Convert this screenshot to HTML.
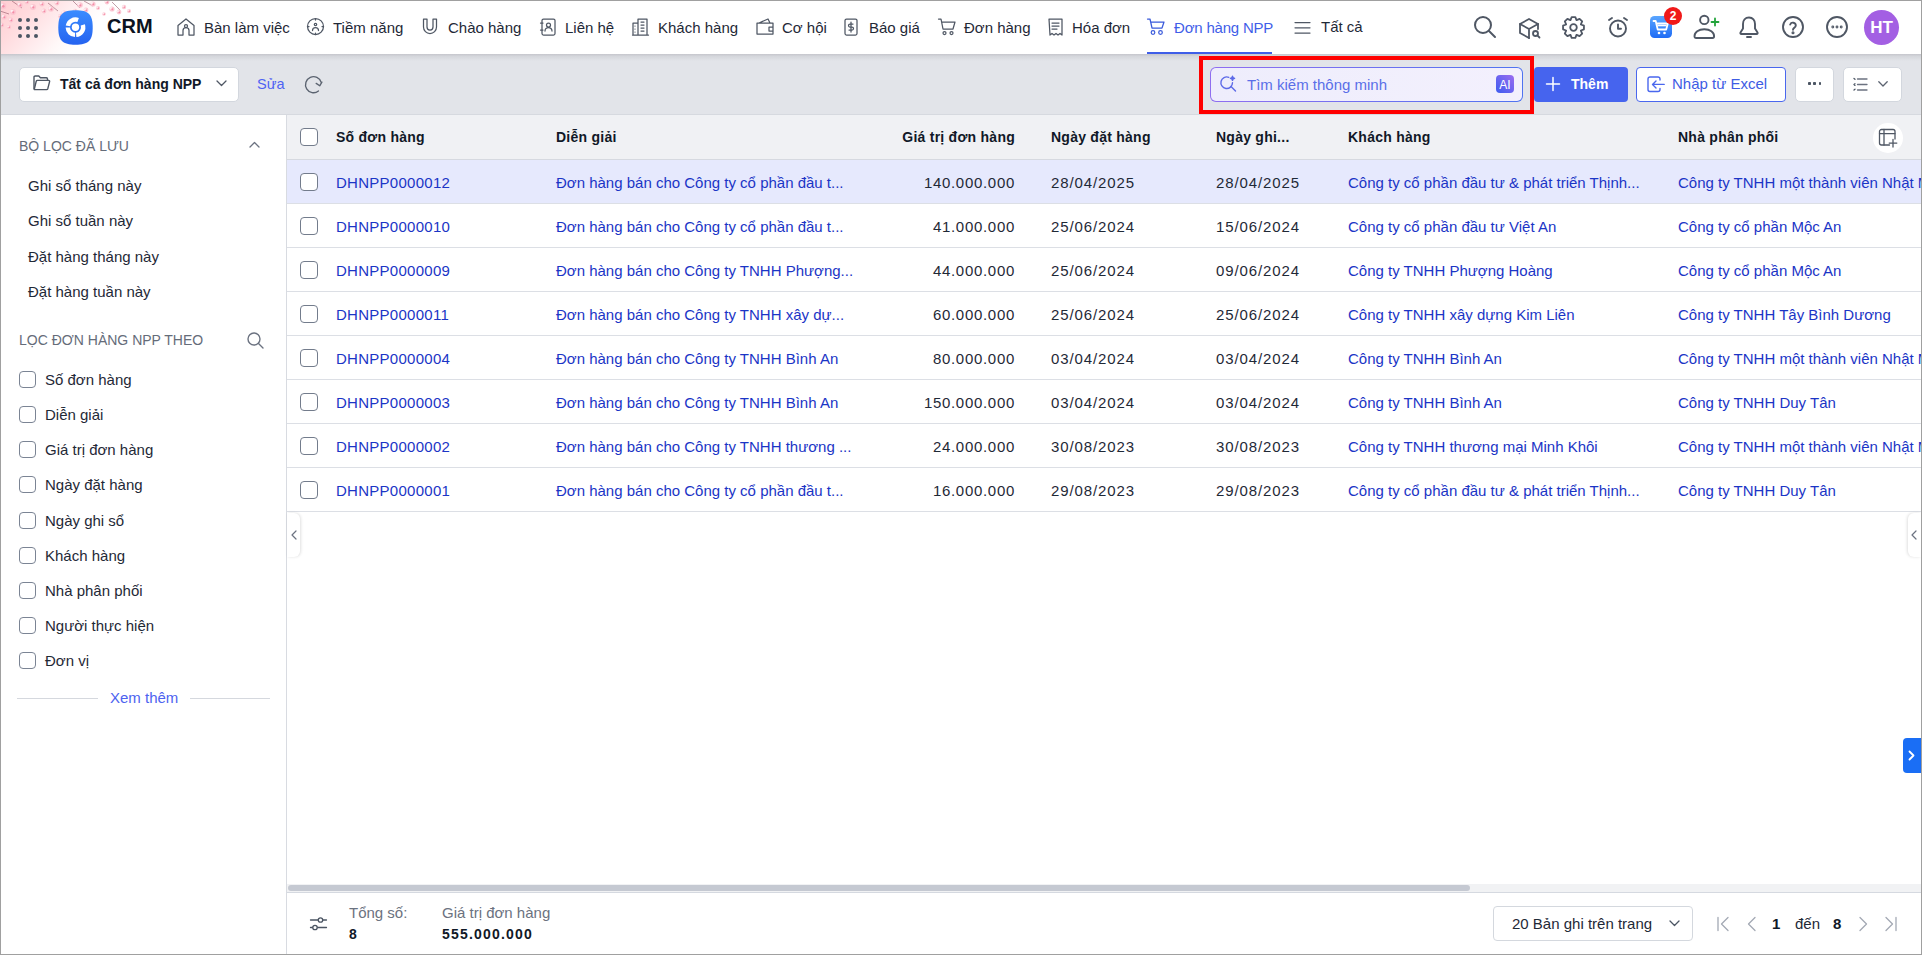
<!DOCTYPE html>
<html><head><meta charset="utf-8">
<style>
*{box-sizing:border-box;margin:0;padding:0}
html,body{width:1922px;height:955px;overflow:hidden;background:#fff;font-family:"Liberation Sans", sans-serif;color:#1f2937}
.a{position:absolute}
.t{position:absolute;white-space:nowrap;line-height:1}
svg{position:absolute;overflow:visible}
</style></head><body>

<div class="a" style="left:0;top:0;width:1922px;height:54px;background:#fff"></div>
<div class="a" style="left:0;top:0;width:160px;height:54px;background:linear-gradient(132deg,#ffcdd2 0px,#ffdadd 28px,#ffeaec 52px,#fff8f8 72px,#ffffff 88px)"></div>
<svg style="left:0;top:0" width="140" height="40" viewBox="0 0 140 40"><path d="M12 1 L22 8 M0 11 L9 14 M48 3 L58 11 M72 0 L80 8 M84 1 L93 6 M112 2 L120 10" stroke="#7d3b4f" stroke-width="0.9" fill="none" opacity="0.55"/><circle cx="3" cy="6" r="3.2" fill="#fbc3cf" opacity="0.9"/><circle cx="1.7" cy="5.0" r="1.4" fill="#ffffff" opacity="0.7"/><circle cx="3.3" cy="6.3" r="1.2" fill="#f3819f" opacity="0.85"/><circle cx="13" cy="12" r="3" fill="#fbc3cf" opacity="0.9"/><circle cx="11.8" cy="11.1" r="1.4" fill="#ffffff" opacity="0.7"/><circle cx="13.3" cy="12.3" r="1.1" fill="#f3819f" opacity="0.85"/><circle cx="20" cy="5" r="2.6" fill="#fbc3cf" opacity="0.9"/><circle cx="19.0" cy="4.2" r="1.2" fill="#ffffff" opacity="0.7"/><circle cx="20.3" cy="5.3" r="1.0" fill="#f3819f" opacity="0.85"/><circle cx="27" cy="2" r="2.2" fill="#fbc3cf" opacity="0.9"/><circle cx="26.1" cy="1.3" r="1.0" fill="#ffffff" opacity="0.7"/><circle cx="27.3" cy="2.3" r="0.8" fill="#f3819f" opacity="0.85"/><circle cx="33" cy="7" r="3" fill="#fbc3cf" opacity="0.9"/><circle cx="31.8" cy="6.1" r="1.4" fill="#ffffff" opacity="0.7"/><circle cx="33.3" cy="7.3" r="1.1" fill="#f3819f" opacity="0.85"/><circle cx="42" cy="4" r="2.5" fill="#fbc3cf" opacity="0.9"/><circle cx="41.0" cy="3.2" r="1.1" fill="#ffffff" opacity="0.7"/><circle cx="42.3" cy="4.3" r="0.9" fill="#f3819f" opacity="0.85"/><circle cx="44" cy="11" r="2.4" fill="#fbc3cf" opacity="0.9"/><circle cx="43.0" cy="10.3" r="1.1" fill="#ffffff" opacity="0.7"/><circle cx="44.3" cy="11.3" r="0.9" fill="#f3819f" opacity="0.85"/><circle cx="51" cy="9" r="2.8" fill="#fbc3cf" opacity="0.9"/><circle cx="49.9" cy="8.2" r="1.3" fill="#ffffff" opacity="0.7"/><circle cx="51.3" cy="9.3" r="1.1" fill="#f3819f" opacity="0.85"/><circle cx="57" cy="3" r="2.4" fill="#fbc3cf" opacity="0.9"/><circle cx="56.0" cy="2.3" r="1.1" fill="#ffffff" opacity="0.7"/><circle cx="57.3" cy="3.3" r="0.9" fill="#f3819f" opacity="0.85"/><circle cx="64" cy="13" r="2.6" fill="#fbc3cf" opacity="0.9"/><circle cx="63.0" cy="12.2" r="1.2" fill="#ffffff" opacity="0.7"/><circle cx="64.3" cy="13.3" r="1.0" fill="#f3819f" opacity="0.85"/><circle cx="75" cy="11" r="2.2" fill="#fbc3cf" opacity="0.9"/><circle cx="74.1" cy="10.3" r="1.0" fill="#ffffff" opacity="0.7"/><circle cx="75.3" cy="11.3" r="0.8" fill="#f3819f" opacity="0.85"/><circle cx="80" cy="5" r="2.8" fill="#fbc3cf" opacity="0.9"/><circle cx="78.9" cy="4.2" r="1.3" fill="#ffffff" opacity="0.7"/><circle cx="80.3" cy="5.3" r="1.1" fill="#f3819f" opacity="0.85"/><circle cx="86" cy="10" r="2.4" fill="#fbc3cf" opacity="0.9"/><circle cx="85.0" cy="9.3" r="1.1" fill="#ffffff" opacity="0.7"/><circle cx="86.3" cy="10.3" r="0.9" fill="#f3819f" opacity="0.85"/><circle cx="93" cy="4" r="2.6" fill="#fbc3cf" opacity="0.9"/><circle cx="92.0" cy="3.2" r="1.2" fill="#ffffff" opacity="0.7"/><circle cx="93.3" cy="4.3" r="1.0" fill="#f3819f" opacity="0.85"/><circle cx="98" cy="8" r="2" fill="#fbc3cf" opacity="0.9"/><circle cx="97.2" cy="7.4" r="0.9" fill="#ffffff" opacity="0.7"/><circle cx="98.3" cy="8.3" r="0.8" fill="#f3819f" opacity="0.85"/><circle cx="107" cy="2" r="2.4" fill="#fbc3cf" opacity="0.9"/><circle cx="106.0" cy="1.3" r="1.1" fill="#ffffff" opacity="0.7"/><circle cx="107.3" cy="2.3" r="0.9" fill="#f3819f" opacity="0.85"/><circle cx="112" cy="9" r="2.6" fill="#fbc3cf" opacity="0.9"/><circle cx="111.0" cy="8.2" r="1.2" fill="#ffffff" opacity="0.7"/><circle cx="112.3" cy="9.3" r="1.0" fill="#f3819f" opacity="0.85"/><circle cx="119" cy="12" r="2.4" fill="#fbc3cf" opacity="0.9"/><circle cx="118.0" cy="11.3" r="1.1" fill="#ffffff" opacity="0.7"/><circle cx="119.3" cy="12.3" r="0.9" fill="#f3819f" opacity="0.85"/><circle cx="124" cy="7" r="2.2" fill="#fbc3cf" opacity="0.9"/><circle cx="123.1" cy="6.3" r="1.0" fill="#ffffff" opacity="0.7"/><circle cx="124.3" cy="7.3" r="0.8" fill="#f3819f" opacity="0.85"/><circle cx="129" cy="11" r="2" fill="#fbc3cf" opacity="0.9"/><circle cx="128.2" cy="10.4" r="0.9" fill="#ffffff" opacity="0.7"/><circle cx="129.3" cy="11.3" r="0.8" fill="#f3819f" opacity="0.85"/><circle cx="4" cy="17" r="2.6" fill="#fbc3cf" opacity="0.9"/><circle cx="3.0" cy="16.2" r="1.2" fill="#ffffff" opacity="0.7"/><circle cx="4.3" cy="17.3" r="1.0" fill="#f3819f" opacity="0.85"/><circle cx="11" cy="20" r="2.4" fill="#fbc3cf" opacity="0.9"/><circle cx="10.0" cy="19.3" r="1.1" fill="#ffffff" opacity="0.7"/><circle cx="11.3" cy="20.3" r="0.9" fill="#f3819f" opacity="0.85"/><circle cx="2" cy="25" r="2.2" fill="#fbc3cf" opacity="0.9"/><circle cx="1.1" cy="24.3" r="1.0" fill="#ffffff" opacity="0.7"/><circle cx="2.3" cy="25.3" r="0.8" fill="#f3819f" opacity="0.85"/><circle cx="9" cy="27" r="2" fill="#fbc3cf" opacity="0.9"/><circle cx="8.2" cy="26.4" r="0.9" fill="#ffffff" opacity="0.7"/><circle cx="9.3" cy="27.3" r="0.8" fill="#f3819f" opacity="0.85"/><circle cx="60" cy="16" r="2" fill="#fbc3cf" opacity="0.9"/><circle cx="59.2" cy="15.4" r="0.9" fill="#ffffff" opacity="0.7"/><circle cx="60.3" cy="16.3" r="0.8" fill="#f3819f" opacity="0.85"/><circle cx="104" cy="14" r="1.8" fill="#fbc3cf" opacity="0.9"/><circle cx="103.3" cy="13.5" r="0.8" fill="#ffffff" opacity="0.7"/><circle cx="104.3" cy="14.3" r="0.7" fill="#f3819f" opacity="0.85"/></svg>
<div class="a" style="left:18px;top:18px;width:4.2px;height:4.2px;border-radius:50%;background:#4b5563"></div>
<div class="a" style="left:18px;top:26px;width:4.2px;height:4.2px;border-radius:50%;background:#4b5563"></div>
<div class="a" style="left:18px;top:34px;width:4.2px;height:4.2px;border-radius:50%;background:#4b5563"></div>
<div class="a" style="left:26px;top:18px;width:4.2px;height:4.2px;border-radius:50%;background:#4b5563"></div>
<div class="a" style="left:26px;top:26px;width:4.2px;height:4.2px;border-radius:50%;background:#4b5563"></div>
<div class="a" style="left:26px;top:34px;width:4.2px;height:4.2px;border-radius:50%;background:#4b5563"></div>
<div class="a" style="left:34px;top:18px;width:4.2px;height:4.2px;border-radius:50%;background:#4b5563"></div>
<div class="a" style="left:34px;top:26px;width:4.2px;height:4.2px;border-radius:50%;background:#4b5563"></div>
<div class="a" style="left:34px;top:34px;width:4.2px;height:4.2px;border-radius:50%;background:#4b5563"></div>
<svg style="left:58px;top:10px" width="35" height="35" viewBox="0 0 35 35">
<defs><linearGradient id="lg" x1="0" y1="0" x2="0" y2="1"><stop offset="0" stop-color="#3a8cff"/><stop offset="1" stop-color="#2563f0"/></linearGradient></defs>
<path d="M17.5 0.3 C30.5 0.3 34.7 4.5 34.7 17.5 C34.7 30.5 30.5 34.7 17.5 34.7 C4.5 34.7 0.3 30.5 0.3 17.5 C0.3 4.5 4.5 0.3 17.5 0.3Z" fill="url(#lg)"/>
<circle cx="17.5" cy="17.2" r="3.7" fill="#fff"/>
<path d="M9.92 15.86 A7.7 7.7 0 0 1 20.13 9.96" stroke="#fff" stroke-width="4.4" fill="none"/>
<path d="M24.82 14.82 A7.7 7.7 0 0 1 18.17 24.87" stroke="#fff" stroke-width="4.4" fill="none"/>
<path d="M17.10 24.89 A7.7 7.7 0 0 1 9.80 17.47" stroke="#fff" stroke-width="4.4" fill="none"/>
</svg>
<div class="t" style="left:107px;top:16px;font-size:20px;font-weight:700;color:#0b1220">CRM</div>
<svg style="left:177px;top:18px" width="18" height="18" viewBox="0 0 18 18" fill="none" stroke="#4f5764" stroke-width="1.25" stroke-linecap="round" stroke-linejoin="round"><path d="M1 17V7.5L9 1l8 6.5V17h-5v-4.5a3 3 0 0 0-6 0V17z"/><circle cx="9" cy="8" r="1.5"/></svg>
<div class="t" style="left:204px;top:20px;font-size:15px;color:#1f2937">Bàn làm việc</div>
<svg style="left:307px;top:18px" width="18" height="18" viewBox="0 0 18 18" fill="none" stroke="#4f5764" stroke-width="1.25" stroke-linecap="round" stroke-linejoin="round"><circle cx="8.5" cy="8.5" r="8"/><circle cx="8.5" cy="6.5" r="1.2"/><path d="M5.5 12.5a3 3 0 0 1 6 0"/><path d="M8.5 0.5v1.5M0.5 8.5h1.5M15 8.5h1.5M8.5 15v1.5"/></svg>
<div class="t" style="left:333px;top:20px;font-size:15px;color:#1f2937">Tiềm năng</div>
<svg style="left:422px;top:18px" width="18" height="18" viewBox="0 0 18 18" fill="none" stroke="#4f5764" stroke-width="1.25" stroke-linecap="round" stroke-linejoin="round"><path d="M1.5 1v8a6.5 6.5 0 0 0 13 0V1h-3.5v8a3 3 0 0 1-6 0V1z"/></svg>
<div class="t" style="left:448px;top:20px;font-size:15px;color:#1f2937">Chào hàng</div>
<svg style="left:540px;top:18px" width="18" height="18" viewBox="0 0 18 18" fill="none" stroke="#4f5764" stroke-width="1.25" stroke-linecap="round" stroke-linejoin="round"><rect x="2" y="1" width="13" height="16" rx="1.5"/><circle cx="8.5" cy="7" r="2"/><path d="M5 13a3.5 3.5 0 0 1 7 0M0.5 5h2.5M0.5 12h2.5"/></svg>
<div class="t" style="left:565px;top:20px;font-size:15px;color:#1f2937">Liên hệ</div>
<svg style="left:632px;top:18px" width="18" height="18" viewBox="0 0 18 18" fill="none" stroke="#4f5764" stroke-width="1.25" stroke-linecap="round" stroke-linejoin="round"><path d="M1 17V5h5M6 17V1h9v16M0.5 17h16M3 8v0M3 11v0M3 14v0M9 4h3M9 7h3M9 10h3M9 13h3"/></svg>
<div class="t" style="left:658px;top:20px;font-size:15px;color:#1f2937">Khách hàng</div>
<svg style="left:756px;top:18px" width="18" height="18" viewBox="0 0 18 18" fill="none" stroke="#4f5764" stroke-width="1.25" stroke-linecap="round" stroke-linejoin="round"><path d="M1 5h16v11H1zM3 5l9-4 2 4M13 9h4v4h-4z"/></svg>
<div class="t" style="left:782px;top:20px;font-size:15px;color:#1f2937">Cơ hội</div>
<svg style="left:844px;top:18px" width="18" height="18" viewBox="0 0 18 18" fill="none" stroke="#4f5764" stroke-width="1.25" stroke-linecap="round" stroke-linejoin="round"><rect x="1" y="1" width="12" height="16" rx="1.5"/><path d="M7 4v10M9 6H6a1 1 0 0 0 0 3h2a1 1 0 0 1 0 3H5"/></svg>
<div class="t" style="left:869px;top:20px;font-size:15px;color:#1f2937">Báo giá</div>
<svg style="left:938px;top:18px" width="18" height="18" viewBox="0 0 18 18" fill="none" stroke="#4f5764" stroke-width="1.25" stroke-linecap="round" stroke-linejoin="round"><path d="M0.5 1h2.5l2 10h10l2-7H4"/><circle cx="6.5" cy="15" r="1.5"/><circle cx="13.5" cy="15" r="1.5"/></svg>
<div class="t" style="left:964px;top:20px;font-size:15px;color:#1f2937">Đơn hàng</div>
<svg style="left:1048px;top:18px" width="18" height="18" viewBox="0 0 18 18" fill="none" stroke="#4f5764" stroke-width="1.25" stroke-linecap="round" stroke-linejoin="round"><path d="M1 1h13v16l-2-1.5-2 1.5-2-1.5-2 1.5-2-1.5-2 1.5zM4 5h7M4 8h7M4 11h5"/></svg>
<div class="t" style="left:1072px;top:20px;font-size:15px;color:#1f2937">Hóa đơn</div>
<svg style="left:1147px;top:18px" width="18" height="18" viewBox="0 0 18 18" fill="none" stroke="#3b5bdb" stroke-width="1.25" stroke-linecap="round" stroke-linejoin="round"><path d="M0.5 1h2.5l2 9h10l2-6H4"/><circle cx="6" cy="14.5" r="1.8"/><circle cx="13.5" cy="14.5" r="1.8"/></svg>
<div class="t" style="left:1174px;top:20px;font-size:15px;letter-spacing:-0.2px;color:#3f5ee8">Đơn hàng NPP</div>
<svg style="left:1294px;top:18px" width="18" height="18" viewBox="0 0 18 18" fill="none" stroke="#4f5764" stroke-width="1.25" stroke-linecap="round" stroke-linejoin="round"><path d="M1 4.5h15M1 9.75h15M1 15h15"/></svg>
<div class="t" style="left:1321px;top:19px;font-size:15px;color:#1f2937">Tất cả</div>
<div class="a" style="left:1147px;top:52px;width:125px;height:2px;background:#3f5ee8"></div>
<svg style="left:1474px;top:16px" width="22" height="22" viewBox="0 0 22 22" fill="none" stroke="#4f5764" stroke-width="2" stroke-linecap="round" stroke-linejoin="round"><circle cx="9" cy="9" r="8"/><path d="M15 15l6 6"/></svg>
<svg style="left:1519px;top:17px" width="22" height="22" viewBox="0 0 22 22" fill="none" stroke="#4f5764" stroke-width="1.8" stroke-linecap="round" stroke-linejoin="round"><path d="M19 7L10 2 1 7v9l9 5"/><path d="M1 7l9 5 9-5M10 12v9M19 7v5"/><circle cx="16.5" cy="16.5" r="2.5"/><path d="M18.3 18.3l2.2 2.2"/></svg>
<svg style="left:1562px;top:16px" width="23" height="23" viewBox="0 0 23 23" fill="none" stroke="#4f5764" stroke-width="1.8" stroke-linecap="round" stroke-linejoin="round"><circle cx="11.5" cy="11.5" r="3.3"/><path d="M9.66 1.06 L13.34 1.06 L14.50 4.08 L14.63 4.14 L17.58 2.82 L20.18 5.42 L18.86 8.37 L18.92 8.50 L21.94 9.66 L21.94 13.34 L18.92 14.50 L18.86 14.63 L20.18 17.58 L17.58 20.18 L14.63 18.86 L14.50 18.92 L13.34 21.94 L9.66 21.94 L8.50 18.92 L8.37 18.86 L5.42 20.18 L2.82 17.58 L4.14 14.63 L4.08 14.50 L1.06 13.34 L1.06 9.66 L4.08 8.50 L4.14 8.37 L2.82 5.42 L5.42 2.82 L8.37 4.14 L8.50 4.08Z"/></svg>
<svg style="left:1608px;top:17px" width="20" height="21" viewBox="0 0 20 21" fill="none" stroke="#4f5764" stroke-width="1.9" stroke-linecap="round" stroke-linejoin="round"><circle cx="10" cy="11.5" r="8"/><path d="M10 7.5v4.2h3M1 3l3-2M19 3l-3-2"/></svg>
<svg style="left:1650px;top:16px" width="22" height="22" viewBox="0 0 22 22">
<defs><linearGradient id="cg" x1="0" y1="0" x2="0" y2="1"><stop offset="0" stop-color="#5aa6ff"/><stop offset="1" stop-color="#1f6cf5"/></linearGradient></defs>
<rect x="0" y="0" width="22" height="22" rx="4.5" fill="url(#cg)"/>
<path d="M3.5 5h2.2l2 8.5h8.5l1.6-6H6.5" stroke="#fff" stroke-width="1.8" fill="none" stroke-linejoin="round" stroke-linecap="round"/>
<path d="M7.5 9.5h9" stroke="#fff" stroke-width="1.6"/>
<circle cx="9" cy="17" r="1.3" fill="#fff"/><circle cx="14.5" cy="17" r="1.3" fill="#fff"/>
</svg>
<div class="a" style="left:1664px;top:7px;width:18px;height:18px;border-radius:50%;background:#f01919"></div>
<div class="t" style="left:1664px;top:10px;width:18px;text-align:center;font-size:12px;font-weight:700;color:#fff">2</div>
<svg style="left:1693px;top:15px" width="26" height="24" viewBox="0 0 26 24" fill="none" stroke="#4f5764" stroke-width="1.9" stroke-linecap="round" stroke-linejoin="round"><circle cx="11.3" cy="4.9" r="4.2"/><path d="M1.5 21.3c0-4.2 4-7 9.8-7s9.8 2.8 9.8 7c0 1-.6 1.7-1.6 1.7H3.1c-1 0-1.6-.7-1.6-1.7z"/></svg>
<svg style="left:1711px;top:18px" width="8" height="8" viewBox="0 0 8 8" fill="none" stroke="#22a33a" stroke-width="1.8" stroke-linecap="round" stroke-linejoin="round"><path d="M4 0.5v7M0.5 4h7"/></svg>
<svg style="left:1739px;top:16px" width="20" height="23" viewBox="0 0 20 23" fill="none" stroke="#4f5764" stroke-width="1.9" stroke-linecap="round" stroke-linejoin="round"><path d="M10 1.5c-3.8 0-6 3-6 6.5v4.5L1.5 16.5c-.4.7 0 1.5.8 1.5h15.4c.8 0 1.2-.8.8-1.5L16 12.5V8c0-3.5-2.2-6.5-6-6.5z"/><path d="M8 21h4"/></svg>
<svg style="left:1782px;top:16px" width="22" height="22" viewBox="0 0 22 22" fill="none" stroke="#4f5764" stroke-width="1.9" stroke-linecap="round" stroke-linejoin="round"><circle cx="11" cy="11" r="10"/><path d="M8.2 8.5a2.9 2.9 0 0 1 5.6 1c0 2-2.8 2.5-2.8 4.2"/><circle cx="11" cy="16.8" r="0.6" fill="#4b5563"/></svg>
<svg style="left:1826px;top:16px" width="22" height="22" viewBox="0 0 22 22" fill="none" stroke="#4f5764" stroke-width="1.9" stroke-linecap="round" stroke-linejoin="round"><circle cx="11" cy="11" r="10"/><circle cx="6.8" cy="11" r="0.5" fill="#4b5563"/><circle cx="11" cy="11" r="0.5" fill="#4b5563"/><circle cx="15.2" cy="11" r="0.5" fill="#4b5563"/></svg>
<div class="a" style="left:1864px;top:10px;width:35px;height:35px;border-radius:50%;background:#a35fe3"></div>
<div class="t" style="left:1864px;top:19px;width:35px;text-align:center;font-size:17px;font-weight:700;color:#fff">HT</div>
<div class="a" style="left:0;top:54px;width:1922px;height:61px;background:#e2e4e9"></div>
<div class="a" style="left:0;top:54px;width:1922px;height:7px;background:linear-gradient(#c5c6cc,#d5d7dc 35%,#e2e4e9)"></div>
<div class="a" style="left:0;top:114px;width:1922px;height:1px;background:#d6d9df"></div>
<div class="a" style="left:19px;top:67px;width:220px;height:35px;background:#fff;border-radius:5px;border:1px solid #d3d7de"></div>
<svg style="left:33px;top:75px" width="18" height="16" viewBox="0 0 18 16" fill="none" stroke="#4f5764" stroke-width="1.4" stroke-linecap="round" stroke-linejoin="round"><path d="M1 13.5V2.2C1 1.5 1.5 1 2.2 1h3.6l1.6 1.8h6c.7 0 1.1.5 1.1 1.1V5"/><path d="M1.2 14.5l2-8.2c.2-.6.6-.9 1.2-.9h11.2c.7 0 1.2.6 1 1.3l-1.8 7c-.2.6-.6.9-1.2.9H1.2z"/></svg>
<div class="t" style="left:60px;top:77px;font-size:14px;font-weight:700;color:#111827">Tất cả đơn hàng NPP</div>
<svg style="left:216px;top:80px" width="11" height="7" viewBox="0 0 11 7" fill="none" stroke="#4f5764" stroke-width="1.3" stroke-linecap="round" stroke-linejoin="round"><path d="M1 1l4.5 4.5L10 1"/></svg>
<div class="t" style="left:257px;top:77px;font-size:14.5px;color:#4e62f3">Sửa</div>
<svg style="left:304px;top:76px" width="20" height="18" viewBox="0 0 20 18" fill="none" stroke="#5b6370" stroke-width="1.35" stroke-linecap="round" stroke-linejoin="round"><path d="M14.44 15.03A8 8 0 1 1 17.2 6.4"/><path d="M12.2 7.4l3.5 2.4 2.2-3.6"/></svg>
<div class="a" style="left:1199px;top:56px;width:335px;height:58px;border:4px solid #ff0000"></div>
<div class="a" style="left:1210px;top:67px;width:313px;height:35px;border-radius:6px;background:linear-gradient(90deg,#8f6ef0,#4f73f0);padding:1px"><div style="width:100%;height:100%;border-radius:5px;background:linear-gradient(90deg,#eeedfc,#f3f0fd)"></div></div>
<svg style="left:1220px;top:75px" width="17" height="17" viewBox="0 0 17 17" fill="none" stroke="#5d6ae8" stroke-width="1.4" stroke-linecap="round" stroke-linejoin="round"><path d="M12.5 7.8A5.8 5.8 0 1 1 8.8 2.3"/><path d="M11 11.5l4.5 4.5"/><path d="M12.5 1.2l.6 1.5 1.5.6-1.5.6-.6 1.5-.6-1.5-1.5-.6 1.5-.6z" fill="#6c63ee"/></svg>
<div class="t" style="left:1247px;top:77px;font-size:15px;color:#5a6fe8">Tìm kiếm thông minh</div>
<div class="a" style="left:1496px;top:75px;width:18px;height:18px;border-radius:4px;background:linear-gradient(45deg,#3c5cf0,#9c6cf0)"></div>
<div class="t" style="left:1496px;top:78.5px;width:18px;text-align:center;font-size:12px;color:#fff">AI</div>
<div class="a" style="left:1534px;top:67px;width:94px;height:35px;border-radius:4px;background:#4664ee"></div>
<svg style="left:1546px;top:77px" width="14" height="14" viewBox="0 0 14 14" fill="none" stroke="#fff" stroke-width="1.5" stroke-linecap="round" stroke-linejoin="round"><path d="M7 0.5v13M0.5 7h13"/></svg>
<div class="t" style="left:1571px;top:77px;font-size:14px;font-weight:700;color:#fff">Thêm</div>
<div class="a" style="left:1636px;top:67px;width:150px;height:35px;border-radius:4px;background:#fff;border:1px solid #4a67ee"></div>
<svg style="left:1647px;top:76px" width="19" height="17" viewBox="0 0 19 17" fill="none" stroke="#4a67ee" stroke-width="1.4" stroke-linecap="round" stroke-linejoin="round"><path d="M13 4V3a2 2 0 0 0-2-2H3a2 2 0 0 0-2 2v10.5a2 2 0 0 0 2 2h8a2 2 0 0 0 2-2v-1"/><path d="M17.2 8.4H5.5M9 4.9L5.5 8.4 9 11.9"/></svg>
<div class="t" style="left:1672px;top:76px;font-size:15px;color:#3e5ce4">Nhập từ Excel</div>
<div class="a" style="left:1795px;top:67px;width:39px;height:35px;border-radius:5px;background:#fff;border:1px solid #d3d7de"></div>
<div class="a" style="left:1807.8px;top:82.4px;width:2.9px;height:2.9px;border-radius:0.8px;background:#4b5563"></div>
<div class="a" style="left:1813.2px;top:82.4px;width:2.9px;height:2.9px;border-radius:0.8px;background:#4b5563"></div>
<div class="a" style="left:1818.6px;top:82.4px;width:2.9px;height:2.9px;border-radius:0.8px;background:#4b5563"></div>
<div class="a" style="left:1843px;top:67px;width:59px;height:35px;border-radius:5px;background:#fff;border:1px solid #d3d7de"></div>
<svg style="left:1853px;top:77px" width="15" height="15" viewBox="0 0 15 15" fill="none" stroke="#4b5563" stroke-width="1.3" stroke-linecap="round" stroke-linejoin="round"><path d="M4.5 2h9.5M4.5 7.5h9.5M4.5 13h9.5" stroke="#6b7280"/><path d="M1 1.5l1 .8M2 6.8l-1 .8 1 .8M2 12.2l-1 .8"/></svg>
<svg style="left:1878px;top:81px" width="10" height="6" viewBox="0 0 10 6" fill="none" stroke="#5b6370" stroke-width="1.3" stroke-linecap="round" stroke-linejoin="round"><path d="M0.8 0.8l4.2 4.2 4.2-4.2"/></svg>
<div class="a" style="left:0;top:115px;width:286px;height:840px;background:#fff"></div>
<div class="a" style="left:286px;top:115px;width:1px;height:840px;background:#d8dbe1"></div>
<div class="t" style="left:19px;top:139px;font-size:14px;color:#656c79">BỘ LỌC ĐÃ LƯU</div>
<svg style="left:249px;top:141px" width="11" height="7" viewBox="0 0 11 7" fill="none" stroke="#6b7280" stroke-width="1.3" stroke-linecap="round" stroke-linejoin="round"><path d="M1 6l4.5-4.5L10 6"/></svg>
<div class="t" style="left:28px;top:178px;font-size:15px;color:#1f2937">Ghi sổ tháng này</div>
<div class="t" style="left:28px;top:213px;font-size:15px;color:#1f2937">Ghi sổ tuần này</div>
<div class="t" style="left:28px;top:249px;font-size:15px;color:#1f2937">Đặt hàng tháng này</div>
<div class="t" style="left:28px;top:284px;font-size:15px;color:#1f2937">Đặt hàng tuần này</div>
<div class="t" style="left:19px;top:333px;font-size:14px;color:#656c79">LỌC ĐƠN HÀNG NPP THEO</div>
<svg style="left:247px;top:332px" width="17" height="17" viewBox="0 0 17 17" fill="none" stroke="#6b7280" stroke-width="1.4" stroke-linecap="round" stroke-linejoin="round"><circle cx="7" cy="7" r="6"/><path d="M11.5 11.5l4.5 4.5"/></svg>
<div class="a" style="left:19px;top:371px;width:17px;height:17px;border:1.3px solid #7b8494;border-radius:4px;background:#fff"></div>
<div class="t" style="left:45px;top:372px;font-size:15px;color:#1f2937">Số đơn hàng</div>
<div class="a" style="left:19px;top:406px;width:17px;height:17px;border:1.3px solid #7b8494;border-radius:4px;background:#fff"></div>
<div class="t" style="left:45px;top:407px;font-size:15px;color:#1f2937">Diễn giải</div>
<div class="a" style="left:19px;top:441px;width:17px;height:17px;border:1.3px solid #7b8494;border-radius:4px;background:#fff"></div>
<div class="t" style="left:45px;top:442px;font-size:15px;color:#1f2937">Giá trị đơn hàng</div>
<div class="a" style="left:19px;top:476px;width:17px;height:17px;border:1.3px solid #7b8494;border-radius:4px;background:#fff"></div>
<div class="t" style="left:45px;top:477px;font-size:15px;color:#1f2937">Ngày đặt hàng</div>
<div class="a" style="left:19px;top:512px;width:17px;height:17px;border:1.3px solid #7b8494;border-radius:4px;background:#fff"></div>
<div class="t" style="left:45px;top:513px;font-size:15px;color:#1f2937">Ngày ghi sổ</div>
<div class="a" style="left:19px;top:547px;width:17px;height:17px;border:1.3px solid #7b8494;border-radius:4px;background:#fff"></div>
<div class="t" style="left:45px;top:548px;font-size:15px;color:#1f2937">Khách hàng</div>
<div class="a" style="left:19px;top:582px;width:17px;height:17px;border:1.3px solid #7b8494;border-radius:4px;background:#fff"></div>
<div class="t" style="left:45px;top:583px;font-size:15px;color:#1f2937">Nhà phân phối</div>
<div class="a" style="left:19px;top:617px;width:17px;height:17px;border:1.3px solid #7b8494;border-radius:4px;background:#fff"></div>
<div class="t" style="left:45px;top:618px;font-size:15px;color:#1f2937">Người thực hiện</div>
<div class="a" style="left:19px;top:652px;width:17px;height:17px;border:1.3px solid #7b8494;border-radius:4px;background:#fff"></div>
<div class="t" style="left:45px;top:653px;font-size:15px;color:#1f2937">Đơn vị</div>
<div class="a" style="left:17px;top:698px;width:81px;height:1px;background:#d5d8de"></div>
<div class="a" style="left:190px;top:698px;width:80px;height:1px;background:#d5d8de"></div>
<div class="t" style="left:110px;top:690px;font-size:15px;color:#4d63f0">Xem thêm</div>
<div class="a" style="left:287px;top:115px;width:1635px;height:44px;background:#f0f1f4"></div>
<div class="a" style="left:287px;top:159px;width:1635px;height:1px;background:#d6d9e0"></div>
<div class="a" style="left:300px;top:128px;width:18px;height:18px;border:1.3px solid #737c8c;border-radius:4px;background:#fff"></div>
<div class="t" style="left:336px;top:130px;font-size:14px;font-weight:700;letter-spacing:0.25px;color:#111827">Số đơn hàng</div>
<div class="t" style="left:556px;top:130px;font-size:14px;font-weight:700;letter-spacing:0.25px;color:#111827">Diễn giải</div>
<div class="t" style="left:815px;width:200px;text-align:right;top:130px;font-size:14px;font-weight:700;letter-spacing:0.25px;margin-right:-0.25px;color:#111827">Giá trị đơn hàng</div>
<div class="t" style="left:1051px;top:130px;font-size:14px;font-weight:700;letter-spacing:0.25px;color:#111827">Ngày đặt hàng</div>
<div class="t" style="left:1216px;top:130px;font-size:14px;font-weight:700;letter-spacing:0.25px;color:#111827">Ngày ghi...</div>
<div class="t" style="left:1348px;top:130px;font-size:14px;font-weight:700;letter-spacing:0.25px;color:#111827">Khách hàng</div>
<div class="t" style="left:1678px;top:130px;font-size:14px;font-weight:700;letter-spacing:0.25px;color:#111827">Nhà phân phối</div>
<div class="a" style="left:1873px;top:122.5px;width:30px;height:30px;border-radius:50%;background:#fff"></div>
<svg style="left:1879px;top:129px" width="20" height="20" viewBox="0 0 20 20" fill="none" stroke="#4f5764" stroke-width="1.3" stroke-linecap="round" stroke-linejoin="round"><path d="M10.5 16H2.5A2 2 0 0 1 .5 14V2.5A2 2 0 0 1 2.5 .5h11.5A2 2 0 0 1 16 2.5v7.5"/><path d="M.5 4.6h15.5M5 .5V16"/><path d="M14 10.3v7.7M10.2 14.1h7.6"/></svg>
<div class="a" style="left:287px;top:160px;width:1635px;height:43px;background:#e6e9fd"></div>
<div class="a" style="left:287px;top:203px;width:1635px;height:1px;background:#dcdfe5"></div>
<div class="a" style="left:300px;top:173px;width:18px;height:18px;border:1.3px solid #737c8c;border-radius:4px;background:#fff"></div>
<div class="t" style="left:336px;top:175px;font-size:15px;letter-spacing:0.27px;color:#1b35c6">DHNPP0000012</div>
<div class="t" style="left:556px;top:175px;font-size:15px;color:#1b35c6">Đơn hàng bán cho Công ty cổ phần đầu t...</div>
<div class="t" style="left:815px;width:200px;text-align:right;top:175px;font-size:15px;letter-spacing:0.7px;margin-right:-0.7px;color:#1f2937">140.000.000</div>
<div class="t" style="left:1051px;top:175px;font-size:15px;letter-spacing:0.9px;color:#1f2937">28/04/2025</div>
<div class="t" style="left:1216px;top:175px;font-size:15px;letter-spacing:0.9px;color:#1f2937">28/04/2025</div>
<div class="t" style="left:1348px;top:175px;font-size:15px;color:#1b35c6">Công ty cổ phần đầu tư &amp; phát triển Thịnh...</div>
<div class="t" style="left:1678px;top:175px;font-size:15px;color:#1b35c6">Công ty TNHH một thành viên Nhật Minh</div>
<div class="a" style="left:287px;top:247px;width:1635px;height:1px;background:#dcdfe5"></div>
<div class="a" style="left:300px;top:217px;width:18px;height:18px;border:1.3px solid #737c8c;border-radius:4px;background:#fff"></div>
<div class="t" style="left:336px;top:219px;font-size:15px;letter-spacing:0.27px;color:#1b35c6">DHNPP0000010</div>
<div class="t" style="left:556px;top:219px;font-size:15px;color:#1b35c6">Đơn hàng bán cho Công ty cổ phần đầu t...</div>
<div class="t" style="left:815px;width:200px;text-align:right;top:219px;font-size:15px;letter-spacing:0.7px;margin-right:-0.7px;color:#1f2937">41.000.000</div>
<div class="t" style="left:1051px;top:219px;font-size:15px;letter-spacing:0.9px;color:#1f2937">25/06/2024</div>
<div class="t" style="left:1216px;top:219px;font-size:15px;letter-spacing:0.9px;color:#1f2937">15/06/2024</div>
<div class="t" style="left:1348px;top:219px;font-size:15px;color:#1b35c6">Công ty cổ phần đầu tư Việt An</div>
<div class="t" style="left:1678px;top:219px;font-size:15px;color:#1b35c6">Công ty cổ phần Mộc An</div>
<div class="a" style="left:287px;top:291px;width:1635px;height:1px;background:#dcdfe5"></div>
<div class="a" style="left:300px;top:261px;width:18px;height:18px;border:1.3px solid #737c8c;border-radius:4px;background:#fff"></div>
<div class="t" style="left:336px;top:263px;font-size:15px;letter-spacing:0.27px;color:#1b35c6">DHNPP0000009</div>
<div class="t" style="left:556px;top:263px;font-size:15px;color:#1b35c6">Đơn hàng bán cho Công ty TNHH Phượng...</div>
<div class="t" style="left:815px;width:200px;text-align:right;top:263px;font-size:15px;letter-spacing:0.7px;margin-right:-0.7px;color:#1f2937">44.000.000</div>
<div class="t" style="left:1051px;top:263px;font-size:15px;letter-spacing:0.9px;color:#1f2937">25/06/2024</div>
<div class="t" style="left:1216px;top:263px;font-size:15px;letter-spacing:0.9px;color:#1f2937">09/06/2024</div>
<div class="t" style="left:1348px;top:263px;font-size:15px;color:#1b35c6">Công ty TNHH Phượng Hoàng</div>
<div class="t" style="left:1678px;top:263px;font-size:15px;color:#1b35c6">Công ty cổ phần Mộc An</div>
<div class="a" style="left:287px;top:335px;width:1635px;height:1px;background:#dcdfe5"></div>
<div class="a" style="left:300px;top:305px;width:18px;height:18px;border:1.3px solid #737c8c;border-radius:4px;background:#fff"></div>
<div class="t" style="left:336px;top:307px;font-size:15px;letter-spacing:0.27px;color:#1b35c6">DHNPP0000011</div>
<div class="t" style="left:556px;top:307px;font-size:15px;color:#1b35c6">Đơn hàng bán cho Công ty TNHH xây dự...</div>
<div class="t" style="left:815px;width:200px;text-align:right;top:307px;font-size:15px;letter-spacing:0.7px;margin-right:-0.7px;color:#1f2937">60.000.000</div>
<div class="t" style="left:1051px;top:307px;font-size:15px;letter-spacing:0.9px;color:#1f2937">25/06/2024</div>
<div class="t" style="left:1216px;top:307px;font-size:15px;letter-spacing:0.9px;color:#1f2937">25/06/2024</div>
<div class="t" style="left:1348px;top:307px;font-size:15px;color:#1b35c6">Công ty TNHH xây dựng Kim Liên</div>
<div class="t" style="left:1678px;top:307px;font-size:15px;color:#1b35c6">Công ty TNHH Tây Bình Dương</div>
<div class="a" style="left:287px;top:379px;width:1635px;height:1px;background:#dcdfe5"></div>
<div class="a" style="left:300px;top:349px;width:18px;height:18px;border:1.3px solid #737c8c;border-radius:4px;background:#fff"></div>
<div class="t" style="left:336px;top:351px;font-size:15px;letter-spacing:0.27px;color:#1b35c6">DHNPP0000004</div>
<div class="t" style="left:556px;top:351px;font-size:15px;color:#1b35c6">Đơn hàng bán cho Công ty TNHH Bình An</div>
<div class="t" style="left:815px;width:200px;text-align:right;top:351px;font-size:15px;letter-spacing:0.7px;margin-right:-0.7px;color:#1f2937">80.000.000</div>
<div class="t" style="left:1051px;top:351px;font-size:15px;letter-spacing:0.9px;color:#1f2937">03/04/2024</div>
<div class="t" style="left:1216px;top:351px;font-size:15px;letter-spacing:0.9px;color:#1f2937">03/04/2024</div>
<div class="t" style="left:1348px;top:351px;font-size:15px;color:#1b35c6">Công ty TNHH Bình An</div>
<div class="t" style="left:1678px;top:351px;font-size:15px;color:#1b35c6">Công ty TNHH một thành viên Nhật Minh</div>
<div class="a" style="left:287px;top:423px;width:1635px;height:1px;background:#dcdfe5"></div>
<div class="a" style="left:300px;top:393px;width:18px;height:18px;border:1.3px solid #737c8c;border-radius:4px;background:#fff"></div>
<div class="t" style="left:336px;top:395px;font-size:15px;letter-spacing:0.27px;color:#1b35c6">DHNPP0000003</div>
<div class="t" style="left:556px;top:395px;font-size:15px;color:#1b35c6">Đơn hàng bán cho Công ty TNHH Bình An</div>
<div class="t" style="left:815px;width:200px;text-align:right;top:395px;font-size:15px;letter-spacing:0.7px;margin-right:-0.7px;color:#1f2937">150.000.000</div>
<div class="t" style="left:1051px;top:395px;font-size:15px;letter-spacing:0.9px;color:#1f2937">03/04/2024</div>
<div class="t" style="left:1216px;top:395px;font-size:15px;letter-spacing:0.9px;color:#1f2937">03/04/2024</div>
<div class="t" style="left:1348px;top:395px;font-size:15px;color:#1b35c6">Công ty TNHH Bình An</div>
<div class="t" style="left:1678px;top:395px;font-size:15px;color:#1b35c6">Công ty TNHH Duy Tân</div>
<div class="a" style="left:287px;top:467px;width:1635px;height:1px;background:#dcdfe5"></div>
<div class="a" style="left:300px;top:437px;width:18px;height:18px;border:1.3px solid #737c8c;border-radius:4px;background:#fff"></div>
<div class="t" style="left:336px;top:439px;font-size:15px;letter-spacing:0.27px;color:#1b35c6">DHNPP0000002</div>
<div class="t" style="left:556px;top:439px;font-size:15px;color:#1b35c6">Đơn hàng bán cho Công ty TNHH thương ...</div>
<div class="t" style="left:815px;width:200px;text-align:right;top:439px;font-size:15px;letter-spacing:0.7px;margin-right:-0.7px;color:#1f2937">24.000.000</div>
<div class="t" style="left:1051px;top:439px;font-size:15px;letter-spacing:0.9px;color:#1f2937">30/08/2023</div>
<div class="t" style="left:1216px;top:439px;font-size:15px;letter-spacing:0.9px;color:#1f2937">30/08/2023</div>
<div class="t" style="left:1348px;top:439px;font-size:15px;color:#1b35c6">Công ty TNHH thương mại Minh Khôi</div>
<div class="t" style="left:1678px;top:439px;font-size:15px;color:#1b35c6">Công ty TNHH một thành viên Nhật Minh</div>
<div class="a" style="left:287px;top:511px;width:1635px;height:1px;background:#dcdfe5"></div>
<div class="a" style="left:300px;top:481px;width:18px;height:18px;border:1.3px solid #737c8c;border-radius:4px;background:#fff"></div>
<div class="t" style="left:336px;top:483px;font-size:15px;letter-spacing:0.27px;color:#1b35c6">DHNPP0000001</div>
<div class="t" style="left:556px;top:483px;font-size:15px;color:#1b35c6">Đơn hàng bán cho Công ty cổ phần đầu t...</div>
<div class="t" style="left:815px;width:200px;text-align:right;top:483px;font-size:15px;letter-spacing:0.7px;margin-right:-0.7px;color:#1f2937">16.000.000</div>
<div class="t" style="left:1051px;top:483px;font-size:15px;letter-spacing:0.9px;color:#1f2937">29/08/2023</div>
<div class="t" style="left:1216px;top:483px;font-size:15px;letter-spacing:0.9px;color:#1f2937">29/08/2023</div>
<div class="t" style="left:1348px;top:483px;font-size:15px;color:#1b35c6">Công ty cổ phần đầu tư &amp; phát triển Thịnh...</div>
<div class="t" style="left:1678px;top:483px;font-size:15px;color:#1b35c6">Công ty TNHH Duy Tân</div>
<div class="a" style="left:287px;top:513px;width:13px;height:44px;background:#fff;border-radius:0 6px 6px 0;box-shadow:1px 0 3px rgba(0,0,0,0.12)"></div>
<svg style="left:291px;top:530px" width="6" height="10" viewBox="0 0 6 10" fill="none" stroke="#6b7280" stroke-width="1.2" stroke-linecap="round" stroke-linejoin="round"><path d="M5 1L1 5l4 4"/></svg>
<div class="a" style="left:1908px;top:513px;width:13px;height:44px;background:#fff;border-radius:6px 0 0 6px;box-shadow:-1px 0 3px rgba(0,0,0,0.12)"></div>
<svg style="left:1911px;top:530px" width="6" height="10" viewBox="0 0 6 10" fill="none" stroke="#6b7280" stroke-width="1.2" stroke-linecap="round" stroke-linejoin="round"><path d="M5 1L1 5l4 4"/></svg>
<div class="a" style="left:1903px;top:738px;width:18px;height:35px;background:#1a6ef5;border-radius:4px 0 0 4px"></div>
<svg style="left:1908px;top:750px" width="7" height="11" viewBox="0 0 7 11" fill="none" stroke="#fff" stroke-width="1.8" stroke-linecap="round" stroke-linejoin="round"><path d="M1.5 1.5l4 4-4 4"/></svg>
<div class="a" style="left:287px;top:884px;width:1635px;height:8px;background:#f1f2f4"></div>
<div class="a" style="left:288px;top:885px;width:1182px;height:6px;border-radius:3px;background:#c5c9d2"></div>
<div class="a" style="left:287px;top:892px;width:1635px;height:1px;background:#d5d9e0"></div>
<svg style="left:310px;top:915px" width="17" height="15" viewBox="0 0 17 15" fill="none" stroke="#4b5563" stroke-width="1.3" stroke-linecap="round" stroke-linejoin="round"><path d="M0.5 5h16M0.5 12.5h16"/><circle cx="10.5" cy="5" r="2.2" fill="#fff"/><circle cx="5" cy="12.5" r="2.2" fill="#fff"/></svg>
<div class="t" style="left:349px;top:905px;font-size:15px;color:#6b7280">Tổng số:</div>
<div class="t" style="left:349px;top:927px;font-size:14px;font-weight:700;color:#111827">8</div>
<div class="t" style="left:442px;top:905px;font-size:15px;color:#6b7280">Giá trị đơn hàng</div>
<div class="t" style="left:442px;top:927px;font-size:14px;font-weight:700;letter-spacing:1.2px;color:#111827">555.000.000</div>
<div class="a" style="left:1493px;top:906px;width:200px;height:35px;border:1px solid #d4d8de;border-radius:4px;background:#fff"></div>
<div class="t" style="left:1512px;top:916px;font-size:15px;color:#1f2937">20 Bản ghi trên trang</div>
<svg style="left:1669px;top:920px" width="11" height="6" viewBox="0 0 11 6" fill="none" stroke="#4b5563" stroke-width="1.3" stroke-linecap="round" stroke-linejoin="round"><path d="M1 1l4.5 4.5L10 1"/></svg>
<svg style="left:1717px;top:917px" width="12" height="14" viewBox="0 0 12 14" fill="none" stroke="#a3a9b4" stroke-width="1.3" stroke-linecap="round" stroke-linejoin="round"><path d="M1 0.5v13M11 0.5L4.5 7 11 13.5"/></svg>
<svg style="left:1746px;top:917px" width="10" height="14" viewBox="0 0 10 14" fill="none" stroke="#a3a9b4" stroke-width="1.3" stroke-linecap="round" stroke-linejoin="round"><path d="M9 0.5L2.5 7 9 13.5"/></svg>
<div class="t" style="left:1772px;top:916px;font-size:15px;font-weight:700;color:#111827">1</div>
<div class="t" style="left:1795px;top:916px;font-size:15px;color:#1f2937">đến</div>
<div class="t" style="left:1833px;top:916px;font-size:15px;font-weight:700;color:#111827">8</div>
<svg style="left:1859px;top:917px" width="10" height="14" viewBox="0 0 10 14" fill="none" stroke="#a3a9b4" stroke-width="1.3" stroke-linecap="round" stroke-linejoin="round"><path d="M1 0.5L7.5 7 1 13.5"/></svg>
<svg style="left:1885px;top:917px" width="12" height="14" viewBox="0 0 12 14" fill="none" stroke="#a3a9b4" stroke-width="1.3" stroke-linecap="round" stroke-linejoin="round"><path d="M1 0.5L7.5 7 1 13.5M11 0.5v13"/></svg>
<div class="a" style="left:0;top:0;width:1922px;height:1px;background:#a0a0a0"></div>
<div class="a" style="left:0;top:954px;width:1922px;height:1px;background:#a0a0a0"></div>
<div class="a" style="left:0;top:0;width:1px;height:955px;background:#a0a0a0"></div>
<div class="a" style="left:1921px;top:0;width:1px;height:955px;background:#a0a0a0"></div>
</body></html>
